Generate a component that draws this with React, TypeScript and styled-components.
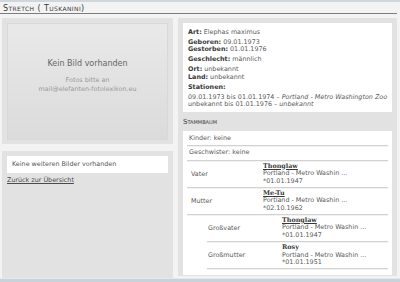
import styled, { createGlobalStyle } from 'styled-components';

const GlobalStyle = createGlobalStyle`
  html, body { margin: 0; padding: 0; background: #f3f3f3; }
  body { font-family: "DejaVu Sans", Verdana, sans-serif; }
`

const Page = styled.div`
  width: 400px;
  height: 282px;
  display: flex;
  flex-direction: column;
  overflow: hidden;
  background: #f3f3f3;
  border-top: 2px solid #cfd6de;
  box-sizing: border-box;
`

const Title = styled.div`
  margin: 2px 3px 0 0;
  padding-left: 3px;
  height: 9px;
  line-height: 9px;
  font-size: 8px;
  font-variant: small-caps;
  letter-spacing: 0.4px;
  color: #3a3a3a;
  border-bottom: 1px solid #7d7d7d;
  white-space: nowrap;
`

const Columns = styled.div`
  flex: 1;
  display: flex;
  gap: 5px;
  padding: 4px 3px 0 2px;
  min-height: 0;
`

const LeftCol = styled.div`
  width: 171px;
  display: flex;
  flex-direction: column;
  gap: 7px;
`

const Panel = styled.div<{ $grow?: boolean }>`
  background: #e2e2e2;
  padding: 5px 5px 4px;
  box-sizing: border-box;
  flex: ${p => (p.$grow ? 1 : 'none')};
`

const NoImage = styled.div`
  height: 117px;
  border: 1px solid #d8d8d8;
  background: linear-gradient(#e9e9e9, #dbdbdb);
  display: flex;
  flex-direction: column;
  align-items: center;
  padding-top: 35px;
  box-sizing: border-box;
`

const NoImageTitle = styled.div`
  font-size: 8px;
  color: #666;
  margin-bottom: 8px;
`

const NoImageHint = styled.div`
  font-size: 6.4px;
  line-height: 9px;
  color: #9a9a9a;
  text-align: center;
`

const WhiteNote = styled.div`
  background: #fff;
  height: 17px;
  line-height: 17px;
  padding-left: 5px;
  font-size: 6.4px;
  color: #555;
`

const BackLink = styled.a`
  display: block;
  margin-top: 3px;
  font-size: 6.4px;
  line-height: 8px;
  color: #4a4a4a;
  text-decoration: underline;
`

const RightCol = styled.div`
  width: 219px;
  background: #e2e2e2;
  padding: 5px;
  box-sizing: border-box;
  margin-bottom: 2px;
`

const InfoBox = styled.div`
  background: #fff;
  padding: 5.5px 4px 3px 5px;
  font-size: 6.4px;
  line-height: 7.5px;
  color: #5a5a5a;
`

const InfoGroup = styled.div`
  margin-bottom: 2.5px;
  &:last-child { margin-bottom: 0; }
`

const Label = styled.b`
  color: #383838;
`

const Station = styled.div`
  white-space: nowrap;
  & i { font-style: italic; }
`

const SectionHead = styled.div`
  font-size: 7px;
  font-variant: small-caps;
  color: #3a3a3a;
  height: 19px;
  line-height: 20px;
`

const TreeBox = styled.div`
  background: #fff;
  padding: 1px 4px 4px;
  font-size: 6.4px;
  color: #5a5a5a;
  height: 144px;
  box-sizing: border-box;
`

const SimpleRow = styled.div`
  padding: 3px 2px 3px;
  line-height: 7.5px;
  border-bottom: 1px solid #d2d2d2;
  box-shadow: 0 1px 0 #f2f2f2;
`

const RelRow = styled.div<{ $indent?: boolean }>`
  display: flex;
  align-items: center;
  margin-left: ${p => (p.$indent ? '20px' : '0')};
  padding: 2px 0 1px;
  border-bottom: 1px solid #d2d2d2;
  box-shadow: 0 1px 0 #f2f2f2;
`

const RelLabel = styled.div<{ $indent?: boolean }>`
  width: ${p => (p.$indent ? '75px' : '76px')};
  padding-left: ${p => (p.$indent ? '1px' : '4px')};
  box-sizing: border-box;
  flex: none;
`

const RelInfo = styled.div`
  line-height: 7.7px;
`

const RelName = styled.div<{ $link?: boolean }>`
  font-family: "DejaVu Serif", Georgia, serif;
  font-weight: bold;
  color: #383838;
  text-decoration: ${p => (p.$link ? 'underline' : 'none')};
`

const BottomBar = styled.div`
  height: 3px;
  background: #c9d1d9;
  border-top: 1px solid #e6e9ec;
`

type Rel = { label: string; name: string; date: string; link: boolean; indent?: boolean }

const relatives: Rel[] = [
  { label: 'Vater', name: 'Thonglaw', date: '*01.01.1947', link: true },
  { label: 'Mutter', name: 'Me-Tu', date: '*02.10.1962', link: true },
  { label: 'Großvater', name: 'Thonglaw', date: '*01.01.1947', link: true, indent: true },
  { label: 'Großmutter', name: 'Rosy', date: '*01.01.1951', link: false, indent: true },
]

export default function App() {
  return (
    <>
      <GlobalStyle />
      <Page>
        <Title>Stretch ( Tuskanini)</Title>
        <Columns>
          <LeftCol>
            <Panel>
              <NoImage>
                <NoImageTitle>Kein Bild vorhanden</NoImageTitle>
                <NoImageHint>
                  Fotos bitte an<br />mail@elefanten-fotolexikon.eu
                </NoImageHint>
              </NoImage>
            </Panel>
            <Panel $grow>
              <WhiteNote>Keine weiteren Bilder vorhanden</WhiteNote>
              <BackLink href="#">Zurück zur Übersicht</BackLink>
            </Panel>
          </LeftCol>
          <RightCol>
            <InfoBox>
              <InfoGroup><Label>Art:</Label> Elephas maximus</InfoGroup>
              <InfoGroup>
                <div><Label>Geboren:</Label> 09.01.1973</div>
                <div><Label>Gestorben:</Label> 01.01.1976</div>
              </InfoGroup>
              <InfoGroup><Label>Geschlecht:</Label> männlich</InfoGroup>
              <InfoGroup>
                <div><Label>Ort:</Label> unbekannt</div>
                <div><Label>Land:</Label> unbekannt</div>
              </InfoGroup>
              <InfoGroup><Label>Stationen:</Label></InfoGroup>
              <InfoGroup>
                <Station>09.01.1973 bis 01.01.1974 – <i>Portland - Metro Washington Zoo</i></Station>
                <Station>unbekannt bis 01.01.1976 – <i>unbekannt</i></Station>
              </InfoGroup>
            </InfoBox>
            <SectionHead>Stammbaum</SectionHead>
            <TreeBox>
              <SimpleRow>Kinder: keine</SimpleRow>
              <SimpleRow>Geschwister: keine</SimpleRow>
              {relatives.map((r, i) => (
                <RelRow key={i} $indent={r.indent}>
                  <RelLabel $indent={r.indent}>{r.label}</RelLabel>
                  <RelInfo>
                    <RelName $link={r.link}>{r.name}</RelName>
                    <div>Portland - Metro Washin ...</div>
                    <div>{r.date}</div>
                  </RelInfo>
                </RelRow>
              ))}
            </TreeBox>
          </RightCol>
        </Columns>
        <BottomBar />
      </Page>
    </>
  );
}
